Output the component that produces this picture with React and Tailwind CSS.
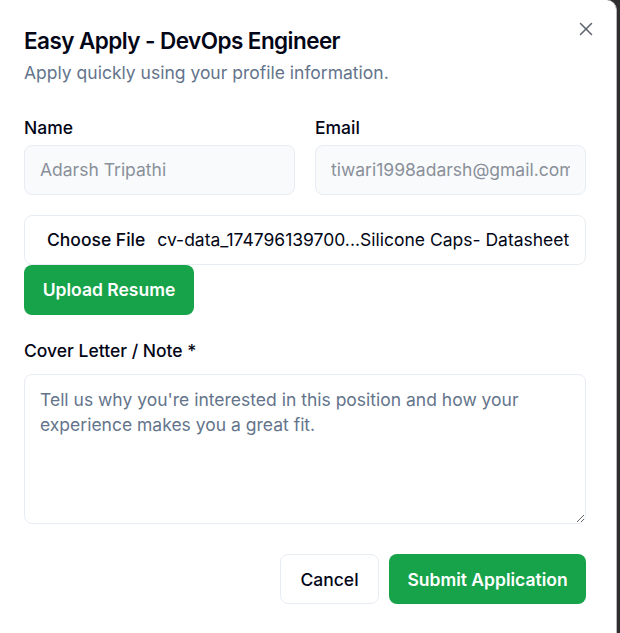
import React from 'react'
import { X } from 'lucide-react'

export default function App() {
  return (
    <div className="flex h-screen w-full overflow-hidden bg-[#2e2e2e] font-['Inter',sans-serif]">
      <div className="relative h-full w-[617px] shrink-0 rounded-tr-[10px] border-r border-[#b8b8bc] bg-white pt-[27px] pl-6 pr-[30px]">
        {/* Close */}
        <button className="absolute right-[19px] top-[18px] text-[#5f6570]">
          <X size={22} strokeWidth={1.7} />
        </button>

        {/* Header */}
        <h2 className="text-[22.5px] font-semibold leading-[28px] tracking-tight text-[#020617]">
          Easy Apply - DevOps Engineer
        </h2>
        <p className="mt-[5px] text-[17.5px] leading-[25px] text-[#64748b]">
          Apply quickly using your profile information.
        </p>

        {/* Name / Email */}
        <div className="mt-[34px] grid grid-cols-2 gap-x-5">
          <div>
            <label className="block text-[17.5px] font-medium leading-none text-[#020617]">Name</label>
            <input
              disabled
              value="Adarsh Tripathi"
              readOnly
              className="mt-2 h-[50px] w-full rounded-[8px] border border-[#e8edf3] bg-[#f8fafc] px-[15px] text-[17.5px] text-[#8a9099]"
            />
          </div>
          <div>
            <label className="block text-[17.5px] font-medium leading-none text-[#020617]">Email</label>
            <input
              disabled
              value="tiwari1998adarsh@gmail.com"
              readOnly
              className="mt-2 h-[50px] w-full rounded-[8px] border border-[#e8edf3] bg-[#f8fafc] px-[15px] text-[17.5px] text-[#8a9099]"
            />
          </div>
        </div>

        {/* Resume file */}
        <div className="mt-5 flex h-[50px] w-full items-center overflow-hidden whitespace-nowrap rounded-[8px] border border-[#e8edf3] bg-white pl-[22px] pt-[2px] text-[17.5px] text-[#020617]">
          <span className="font-medium">Choose File</span>
          <span className="ml-[12px]">cv-data_174796139700...Silicone Caps- Datasheet</span>
        </div>
        <button className="flex h-[50px] w-[170px] items-center justify-center rounded-[8px] bg-[#16a34a] pt-[2px] text-[17.5px] font-semibold text-white">
          Upload Resume
        </button>

        {/* Cover letter */}
        <label className="mt-[27px] block text-[17.5px] font-medium leading-none text-[#020617]">
          Cover Letter / Note *
        </label>
        <textarea
          placeholder="Tell us why you're interested in this position and how your experience makes you a great fit."
          className="mt-[15px] block h-[150px] w-full rounded-[8px] border border-[#e8edf3] bg-white px-[15px] pt-[12px] pb-[10px] text-[17.5px] leading-[25px] text-[#020617] placeholder:text-[#64748b] outline-none"
        />

        {/* Footer */}
        <div className="mt-[30px] flex justify-end gap-[10px]">
          <button className="h-[50px] w-[99px] rounded-[8px] border border-[#e8edf3] bg-white pt-[2px] text-[17.5px] font-medium text-[#020617]">
            Cancel
          </button>
          <button className="h-[50px] w-[197px] rounded-[8px] bg-[#16a34a] pt-[2px] text-[17.5px] font-semibold text-white">
            Submit Application
          </button>
        </div>
      </div>
    </div>
  )
}
